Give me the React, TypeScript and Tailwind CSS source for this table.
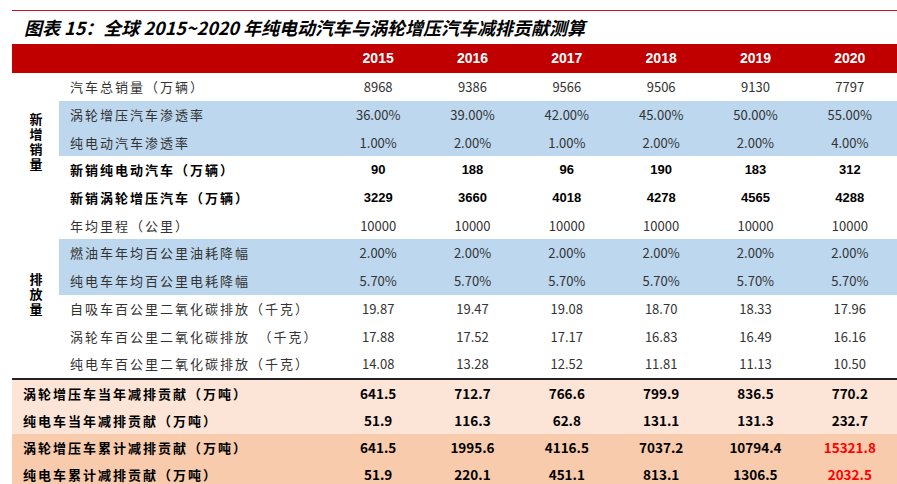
const years = ['2015', '2016', '2017', '2018', '2019', '2020'];

type Row = { name: string; vals: string[]; bg?: string; bold?: boolean; red?: boolean };

const salesRows: Row[] = [
  { name: '汽车总销量（万辆）', vals: ['8968', '9386', '9566', '9506', '9130', '7797'] },
  { name: '涡轮增压汽车渗透率', vals: ['36.00%', '39.00%', '42.00%', '45.00%', '50.00%', '55.00%'], bg: 'bg-[#bdd7ee]' },
  { name: '纯电动汽车渗透率', vals: ['1.00%', '2.00%', '1.00%', '2.00%', '2.00%', '4.00%'], bg: 'bg-[#bdd7ee]' },
  { name: '新销纯电动汽车（万辆）', vals: ['90', '188', '96', '190', '183', '312'], bold: true },
  { name: '新销涡轮增压汽车（万辆）', vals: ['3229', '3660', '4018', '4278', '4565', '4288'], bold: true },
  { name: '年均里程（公里）', vals: ['10000', '10000', '10000', '10000', '10000', '10000'] },
];

const emissionRows: Row[] = [
  { name: '燃油车年均百公里油耗降幅', vals: ['2.00%', '2.00%', '2.00%', '2.00%', '2.00%', '2.00%'], bg: 'bg-[#bdd7ee]' },
  { name: '纯电车年均百公里电耗降幅', vals: ['5.70%', '5.70%', '5.70%', '5.70%', '5.70%', '5.70%'], bg: 'bg-[#bdd7ee]' },
  { name: '自吸车百公里二氧化碳排放（千克）', vals: ['19.87', '19.47', '19.08', '18.70', '18.33', '17.96'] },
  { name: '涡轮车百公里二氧化碳排放　（千克）', vals: ['17.88', '17.52', '17.17', '16.83', '16.49', '16.16'] },
  { name: '纯电车百公里二氧化碳排放（千克）', vals: ['14.08', '13.28', '12.52', '11.81', '11.13', '10.50'] },
];

const resultRows: Row[] = [
  { name: '涡轮增压车当年减排贡献（万吨）', vals: ['641.5', '712.7', '766.6', '799.9', '836.5', '770.2'], bg: 'bg-[#fce4d6]' },
  { name: '纯电车当年减排贡献（万吨）', vals: ['51.9', '116.3', '62.8', '131.1', '131.3', '232.7'], bg: 'bg-[#fce4d6]' },
  { name: '涡轮增压车累计减排贡献（万吨）', vals: ['641.5', '1995.6', '4116.5', '7037.2', '10794.4', '15321.8'], bg: 'bg-[#f8cbad]', red: true },
  { name: '纯电车累计减排贡献（万吨）', vals: ['51.9', '220.1', '451.1', '813.1', '1306.5', '2032.5'], bg: 'bg-[#f8cbad]', red: true },
];

const cjk = "font-['Noto_Sans_CJK_SC',sans-serif]";

const DataRow = ({ row }: { row: Row }) => (
  <div className={`flex h-[27.73px] items-center ${row.bg ?? ''}`}>
    <div
      className={`w-[272px] pl-[11px] text-[13px] tracking-[2px] ${cjk} ${row.bold ? 'font-bold text-black' : 'text-[#333]'}`}
    >
      {row.name}
    </div>
    {row.vals.map((v, i) => (
      <div
        key={i}
        className={`flex-1 text-center text-[13px] ${
          row.bold ? "font-['Liberation_Sans',sans-serif] font-bold text-black" : `${cjk} text-[#333]`
        }`}
      >
        {v}
      </div>
    ))}
  </div>
);

const Section = ({ label, rows }: { label: string; rows: Row[] }) => (
  <div className="flex">
    <div className="flex w-[47px] items-center justify-center pb-[27px]">
      <span
        className={`text-[13px] font-bold leading-[14px] tracking-[2px] text-black [writing-mode:vertical-rl] ${cjk}`}
      >
        {label}
      </span>
    </div>
    <div className="flex-1">
      {rows.map((r) => (
        <DataRow key={r.name} row={r} />
      ))}
    </div>
  </div>
);

export default function App() {
  return (
    <div className="min-h-[484px] w-[897px] overflow-hidden bg-white pt-[10px]">
      <div className="ml-[12px] w-[885px]">
        <div className="h-px bg-[#c8102e]" />
        <div className="flex h-[33px] items-center pl-[12px]">
          <h1 className={`text-[18px] font-bold italic text-black ${cjk}`}>
            图表 15：全球 2015~2020 年纯电动汽车与涡轮增压汽车减排贡献测算
          </h1>
        </div>
        <div className="flex h-[29px] items-center bg-[#c00000]">
          <div className="w-[319px]" />
          {years.map((y) => (
            <div
              key={y}
              className="flex-1 text-center font-['Liberation_Sans',sans-serif] text-[14px] font-bold text-white"
            >
              {y}
            </div>
          ))}
        </div>
        <Section label="新增销量" rows={salesRows} />
        <Section label="排放量" rows={emissionRows} />
        <div className="h-[2px] bg-[#222]" />
        {resultRows.map((r) => (
          <div key={r.name} className={`flex h-[27px] items-center ${r.bg}`}>
            <div className={`w-[319px] pl-[11px] text-[13px] font-bold tracking-[2px] text-black ${cjk}`}>
              {r.name}
            </div>
            {r.vals.map((v, i) => (
              <div
                key={i}
                className={`flex-1 text-center text-[13.5px] font-bold ${cjk} ${
                  r.red && i === 5 ? 'text-[#ff0000]' : 'text-black'
                }`}
              >
                {v}
              </div>
            ))}
          </div>
        ))}
      </div>
    </div>
  );
}
